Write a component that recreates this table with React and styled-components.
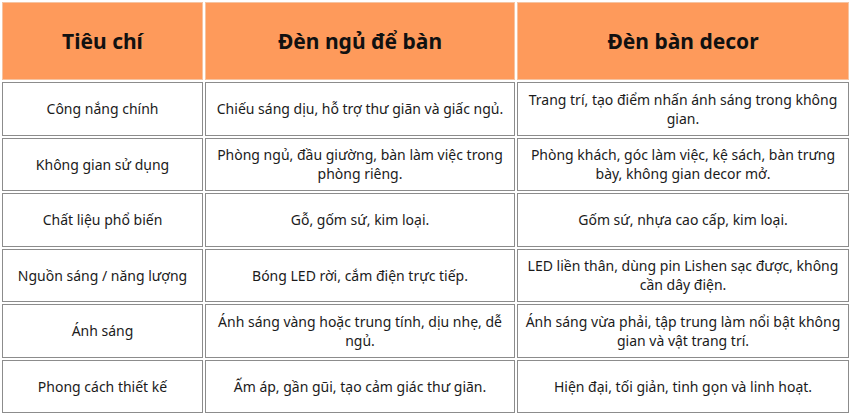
import React from "react";
import styled, { createGlobalStyle } from "styled-components";

const GlobalStyle = createGlobalStyle`
  html, body { margin: 0; padding: 0; background: #ffffff; }
  body { font-family: "Noto Sans", "Open Sans", sans-serif; color: #1b1b1b; }
`;

const Table = styled.table`
  width: 851px;
  table-layout: fixed;
  border-collapse: separate;
  border-spacing: 2px;
`;

const Col = styled.col`
  width: ${(p) => p.$w};
`;

const HeadCell = styled.th`
  height: 76px;
  padding: 0 8px;
  background: #fe9a5b;
  border: 1px solid #f6c4a2;
  font-size: 21px;
  font-weight: 700;
  color: #111111;
  text-align: center;
  vertical-align: middle;
`;

const Cell = styled.td`
  height: 51.5px;
  padding: 0 6px;
  border: 1px solid #8c8c8c;
  font-size: 14px;
  line-height: 19px;
  text-align: center;
  vertical-align: middle;
  color: #1b1b1b;
`;

const rows = [
  ["Công nắng chính", "Chiếu sáng dịu, hỗ trợ thư giãn và giấc ngủ.", "Trang trí, tạo điểm nhấn ánh sáng trong không gian."],
  ["Không gian sử dụng", "Phòng ngủ, đầu giường, bàn làm việc trong phòng riêng.", "Phòng khách, góc làm việc, kệ sách, bàn trưng bày, không gian decor mở."],
  ["Chất liệu phổ biến", "Gỗ, gốm sứ, kim loại.", "Gốm sứ, nhựa cao cấp, kim loại."],
  ["Nguồn sáng / năng lượng", "Bóng LED rời, cắm điện trực tiếp.", "LED liền thân, dùng pin Lishen sạc được, không cần dây điện."],
  ["Ánh sáng", "Ánh sáng vàng hoặc trung tính, dịu nhẹ, dễ ngủ.", "Ánh sáng vừa phải, tập trung làm nổi bật không gian và vật trang trí."],
  ["Phong cách thiết kế", "Ấm áp, gần gũi, tạo cảm giác thư giãn.", "Hiện đại, tối giản, tinh gọn và linh hoạt."],
];

export default function App() {
  return (
    <>
      <GlobalStyle />
      <Table>
        <colgroup>
          <Col $w="201px" />
          <Col $w="310px" />
          <Col $w="auto" />
        </colgroup>
        <thead>
          <tr>
            <HeadCell>Tiêu chí</HeadCell>
            <HeadCell>Đèn ngủ để bàn</HeadCell>
            <HeadCell>Đèn bàn decor</HeadCell>
          </tr>
        </thead>
        <tbody>
          {rows.map((r, i) => (
            <tr key={i}>
              {r.map((c, j) => (
                <Cell key={j}>{c}</Cell>
              ))}
            </tr>
          ))}
        </tbody>
      </Table>
    </>
  );
}
